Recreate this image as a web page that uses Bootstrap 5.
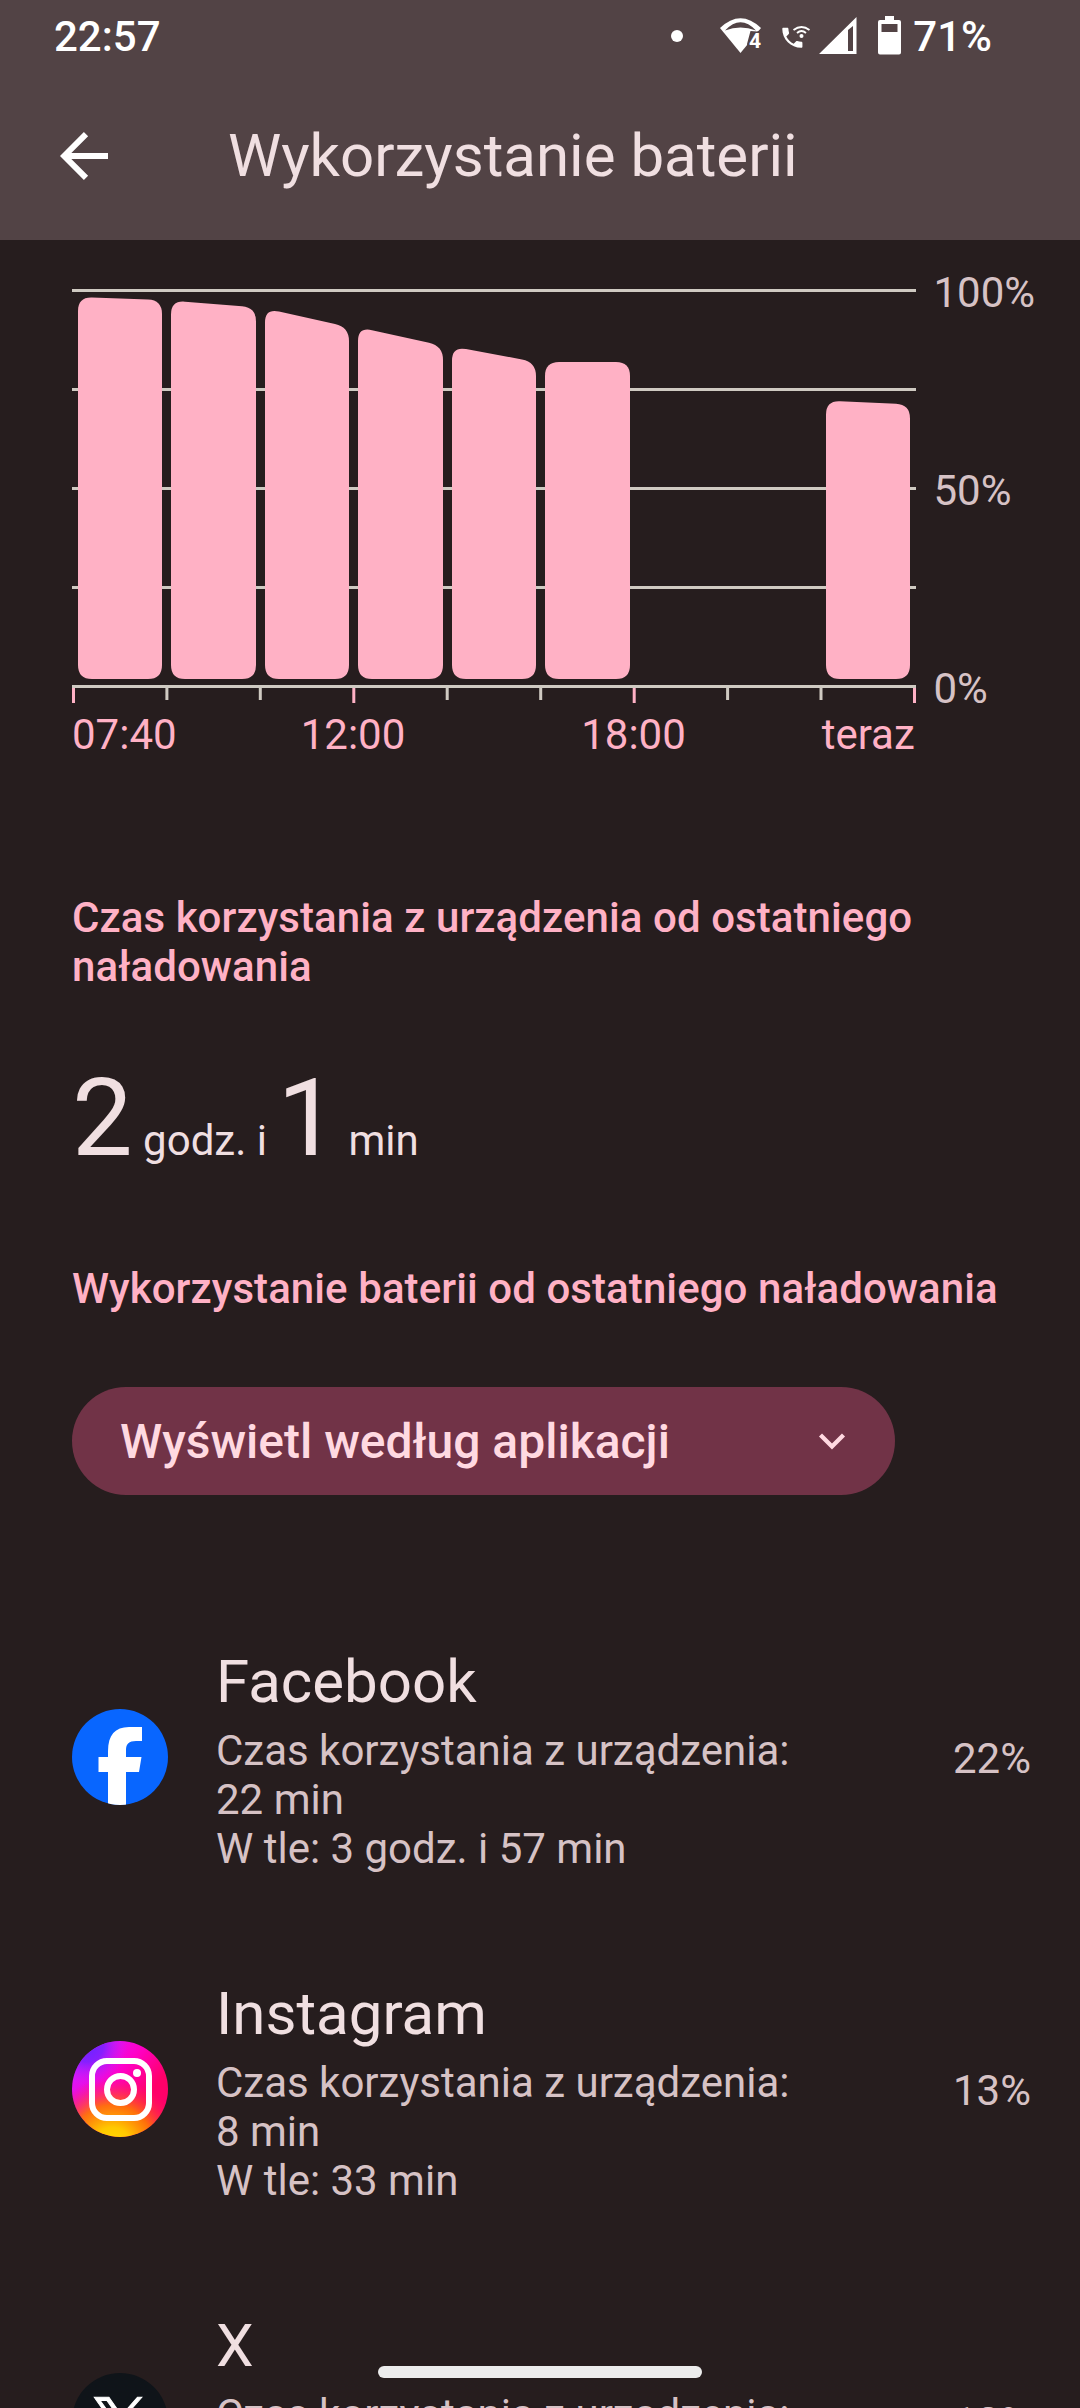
<!DOCTYPE html>
<html lang="pl" data-bs-theme="dark">
<head>
<meta charset="utf-8">
<meta name="viewport" content="width=device-width, initial-scale=1">
<title>Wykorzystanie baterii</title>
<link href="https://cdn.jsdelivr.net/npm/bootstrap@5.3.0/dist/css/bootstrap.min.css" rel="stylesheet">
<style>
:root{--surface:#261d1e;--bar:#524345;--accent:#ffb1c5;--on:#f0dfe1;--muted:#d6c2c5}
html,body{height:2408px;overflow:hidden}
body{background:var(--surface);color:var(--on);font-family:Roboto,"Noto Sans",sans-serif;font-size:42px;line-height:49px}
.screen{width:1080px;height:2408px;overflow:hidden}
.topbar{height:240px;background:var(--bar)}
.statusbar{height:72px;padding:0 88px 0 54px;color:#fff;font-weight:500}
.titlebar{height:168px;padding:0 60px}
.titlebar h1{font-size:60px;line-height:70px;font-weight:400;color:var(--on);margin-left:120px;margin-top:0}
.chart{display:block;height:630px}
.chart text{font-size:42px}
.usage{padding:23px 72px 0}
.section-title{font-size:42px;line-height:49px;font-weight:500;letter-spacing:.08px;color:var(--accent)}
.duration{margin:63px 0 81px;line-height:129px;height:129px;white-space:pre}
.duration b{font-weight:400;font-size:108px}
.pill{width:823px;height:108px;margin-top:74px;padding:0 45px 0 48px;background:#713347;color:#ffd9e1;font-size:48px;font-weight:500;border:0}
.apps{padding-top:99px}
.app-row{height:332px;padding:53px 49px 0 72px}
.app-icon{width:96px;height:96px;margin-top:62px}
.app-name{font-size:60px;line-height:70px}
.app-text{margin-left:48px;width:620px}
.app-detail{color:var(--muted);margin-top:9px}
.app-share{color:var(--muted);margin-top:87px}
.home-pill{width:324px;height:12px;bottom:30px;left:378px;background:#ececec}
</style>
</head>
<body>
<div class="screen position-relative d-flex flex-column">
<header class="topbar flex-shrink-0">
  <div class="statusbar d-flex align-items-center justify-content-between">
    <span>22:57</span>
    <div class="d-flex align-items-center">
      <svg width="244" height="72" viewBox="670 0 244 72" fill="#fff">
        <circle cx="678" cy="36" r="6"/>
        <path d="M721 28Q741.500 8.500 762 28L741.500 53Z"/>
        <path d="M726 30.500Q741.500 14 757 30.500Q741.500 24.500 726 30.500ZM758 31.500L764 29V50H749L748 44 751.500 31Z" fill="#524345"/>
        <text x="750" y="48" font-size="21" font-weight="700">4</text>
        <path transform="translate(779.900 24.300) scale(1.120)" d="M6.620 10.790c1.440 2.830 3.760 5.140 6.590 6.590l2.200-2.200c.27-.27.67-.36 1.020-.24 1.120.37 2.330.57 3.570.57.550 0 1 .45 1 1V20c0 .55-.45 1-1 1-9.390 0-17-7.610-17-17 0-.55.450-1 1-1h3.500c.55 0 1 .45 1 1 0 1.250.2 2.450.57 3.570.11.35.030.74-.25 1.020z"/>
        <circle cx="802.500" cy="36" r="2"/>
        <path d="M798 33Q802.500 29 807 33M794.500 30Q802.500 24 810.500 30" fill="none" stroke="#fff" stroke-width="1.800"/>
        <path fill-rule="evenodd" d="M820 54L857.500 17V54ZM849 30V51H854V26Z"/>
        <path fill-rule="evenodd" d="M886 16H895V20H900Q902 20 902 22V52.500Q902 54.500 900 54.500H881Q879 54.500 879 52.500V22Q879 20 881 20H886ZM882.500 24V32H898.500V24Z"/>
      </svg>
      <span>71%</span>
    </div>
  </div>
  <div class="titlebar d-flex align-items-center">
    <svg width="48" height="48" viewBox="0 0 48 48" fill="none" stroke="#fff" stroke-width="6"><path d="M48 24H5M26 2.200L4.200 24 26 45.800"/></svg>
    <h1 class="mb-0">Wykorzystanie baterii</h1>
  </div>
</header>

<svg class="chart flex-shrink-0" width="1080" height="630" viewBox="0 240 1080 630">
  <path d="M72 289h844v3h-844zM72 388h844v3h-844zM72 487h844v3h-844zM72 586h844v3h-844zM72 685h844v3h-844z" fill="#cfcac2"/>
  <path d="M166.900 688v12M260.300 688v12M447.200 688v12M540.700 688v12M727.600 688v12M821 688v12" stroke="#cfcac2" stroke-width="3"/>
  <path d="M73.500 688v15M353.800 688v15M634.200 688v15M914.500 688v15" stroke="#ffb1c5" stroke-width="3"/>
  <g id="bars" fill="#ffb1c5"></g>
  <g fill="#ffb1c5">
    <text x="72" y="749">07:40</text>
    <text x="353" y="749" text-anchor="middle">12:00</text>
    <text x="633.500" y="749" text-anchor="middle">18:00</text>
    <text x="914.800" y="749" text-anchor="end">teraz</text>
  </g>
  <g fill="#d6c2c5">
    <text x="933.500" y="307">100%</text>
    <text x="933.500" y="505">50%</text>
    <text x="933.500" y="703">0%</text>
  </g>
</svg>

<section class="usage">
  <h2 class="section-title mb-0">Czas korzystania z urządzenia od ostatniego naładowania</h2>
  <div class="duration"><b>2</b> godz. i <b>1</b> min</div>
  <h2 class="section-title mb-0 text-nowrap">Wykorzystanie baterii od ostatniego naładowania</h2>
  <button class="pill rounded-pill d-flex align-items-center justify-content-between" type="button">
    <span>Wyświetl według aplikacji</span>
    <svg width="36" height="36" viewBox="0 0 36 36" fill="none" stroke="#ffd9e1" stroke-width="4.300"><path d="M6.500 12L18 23.500 29.500 12"/></svg>
  </button>
</section>

<main class="apps">
  <div class="app-row d-flex align-items-start">
    <svg class="app-icon flex-shrink-0" viewBox="0 0 96 96"><clipPath id="disc"><circle cx="48" cy="48" r="48"/></clipPath><g clip-path="url(#disc)"><path fill="#0866ff" d="M0 0h96v96H0z"/><path fill="#fff" d="M36 96V63H26.500V48H36V42C36 26 43 18 57 18H70V32H64C57 32 54 35 54 41V48H69.500L67 63H54V96Z"/></g></svg>
    <div class="app-text"><div class="app-name">Facebook</div><div class="app-detail">Czas korzystania z urządzenia:<br>22 min<br>W tle: 3 godz. i 57 min</div></div>
    <span class="app-share ms-auto">22%</span>
  </div>
  <div class="app-row d-flex align-items-start">
    <svg class="app-icon flex-shrink-0" viewBox="0 0 96 96">
      <defs>
        <linearGradient id="igBase" x1=".2" y1=".1" x2=".9" y2=".7"><stop offset="0" stop-color="#d51aff"/><stop offset=".4" stop-color="#ff00c8"/><stop offset=".8" stop-color="#ff0069"/></linearGradient>
        <radialGradient id="igWarm" cx=".42" cy="1.100" r=".72"><stop offset="0" stop-color="#ffe000"/><stop offset=".28" stop-color="#ffc800"/><stop offset=".6" stop-color="#ff7a00" stop-opacity=".9"/><stop offset="1" stop-color="#ff2050" stop-opacity="0"/></radialGradient>
        <radialGradient id="igCool" cx=".16" cy=".05" r=".42"><stop offset="0" stop-color="#6a24ff"/><stop offset=".4" stop-color="#7d20ff" stop-opacity=".9"/><stop offset="1" stop-color="#d51aff" stop-opacity="0"/></radialGradient>
      </defs>
      <g clip-path="url(#disc)"><path fill="url(#igBase)" d="M0 0h96v96H0z"/><path fill="url(#igWarm)" d="M0 0h96v96H0z"/><path fill="url(#igCool)" d="M0 0h96v96H0z"/></g>
      <rect x="20" y="20" width="57" height="57" rx="15" fill="none" stroke="#fff" stroke-width="6"/><circle cx="48.500" cy="48.500" r="13.500" fill="none" stroke="#fff" stroke-width="6"/><circle cx="65" cy="32" r="4" fill="#fff"/>
    </svg>
    <div class="app-text"><div class="app-name">Instagram</div><div class="app-detail">Czas korzystania z urządzenia:<br>8 min<br>W tle: 33 min</div></div>
    <span class="app-share ms-auto">13%</span>
  </div>
  <div class="app-row d-flex align-items-start">
    <svg class="app-icon flex-shrink-0" viewBox="0 0 96 96"><circle cx="48" cy="48" r="48" fill="#0f1419"/><g transform="translate(22.300 24.300) scale(2.050)"><path fill="#fff" d="M14.258 10.152 23.176 0h-2.113l-7.747 8.813L7.133 0H0l9.352 13.328L0 23.973h2.113l8.176-9.309 6.531 9.309h7.133zM2.875 1.559h3.246l14.940 20.960h-3.246z" stroke="#fff" stroke-width=".5"/></g></svg>
    <div class="app-text"><div class="app-name">X</div><div class="app-detail">Czas korzystania z urządzenia:</div></div>
    <span class="app-share ms-auto">12%</span>
  </div>
</main>
<div class="home-pill position-absolute rounded-pill"></div>
</div>
<script>
// Each bar: left, right, top at the left edge, top at the right edge
const bars=[[78,162,297,300],[171,256,300.5,307.5],[265,349,308.5,327],[358,443,327,346],[452,536,346.5,362],[545,630,362,362],[826,910,400.5,404.5]];
const base=679,r=14;
document.getElementById('bars').innerHTML=bars.map(([l,e,a,b])=>{
  const s=(b-a)/(e-l)*r;
  return `<path d="M${l} ${a+r}Q${l} ${a} ${l+r} ${a+s}L${e-r} ${b-s}Q${e} ${b} ${e} ${b+r}V${base-r}Q${e} ${base} ${e-r} ${base}H${l+r}Q${l} ${base} ${l} ${base-r}Z"/>`;
}).join('');
</script>
<script src="https://cdn.jsdelivr.net/npm/bootstrap@5.3.0/dist/js/bootstrap.bundle.min.js"></script>
</body>
</html>
